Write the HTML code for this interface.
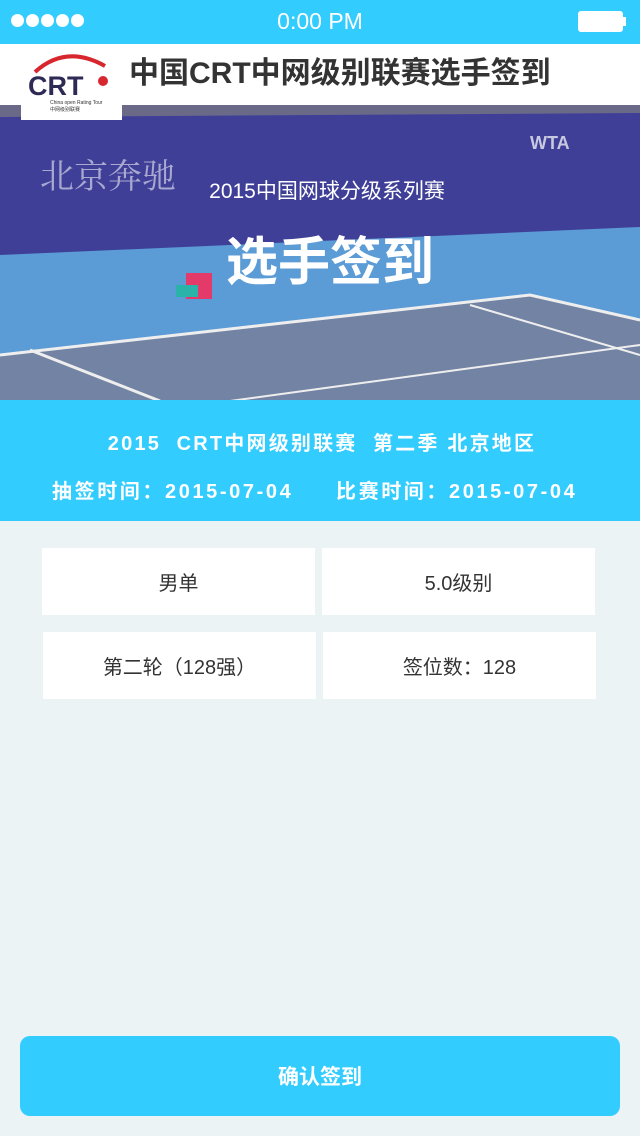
<!DOCTYPE html>
<html><head><meta charset="utf-8"><style>
*{margin:0;padding:0;box-sizing:border-box}
body{width:640px;height:1136px;background:#ecf3f5;font-family:"Liberation Sans","Noto Sans CJK SC",sans-serif;position:relative;overflow:hidden}
.abs{position:absolute}
.status{left:0;top:0;width:640px;height:44px;background:#33ccff;color:#fff}
.dot{width:13px;height:13px;border-radius:50%;background:#fff;top:14px}
.card{background:#fff;display:flex;align-items:center;justify-content:center;font-size:20px;color:#333}
</style></head><body>
<div class="abs status">
 <div class="abs dot" style="left:11px"></div><div class="abs dot" style="left:26px"></div><div class="abs dot" style="left:41px"></div><div class="abs dot" style="left:56px"></div><div class="abs dot" style="left:71px"></div>
 <div class="abs" style="left:0;width:640px;top:8px;text-align:center;font-size:23px">0:00 PM</div>
 <div class="abs" style="left:578px;top:11px;width:45px;height:21px;background:#fff;border-radius:3px"></div>
 <div class="abs" style="left:623px;top:17px;width:3px;height:9px;background:#fff"></div>
</div>
<div class="abs" style="left:0;top:44px;width:640px;height:61px;background:#fff"></div>
<!-- photo -->
<svg class="abs" style="left:0;top:105px" width="640" height="296" viewBox="0 0 640 296">
 <rect width="640" height="296" fill="#5b9bd6"/>
 <rect width="640" height="12" fill="#6a6a88"/>
 <polygon points="0,12 640,8 640,122 0,150" fill="#3f3f98"/>
 <polygon points="0,250 530,190 640,215 640,296 0,296" fill="#7383a4"/>
 <polyline points="0,250 530,190 640,215" stroke="#eee" stroke-width="3" fill="none"/>
 <line x1="30" y1="245" x2="160" y2="296" stroke="#eee" stroke-width="3"/>
 <line x1="230" y1="296" x2="640" y2="240" stroke="#eee" stroke-width="2"/>
 <line x1="470" y1="200" x2="640" y2="250" stroke="#eee" stroke-width="2"/>
 <text x="40" y="83" font-size="34" fill="#a8a8d0" font-family="Noto Serif CJK SC,serif">北京奔驰</text>
 <text x="530" y="44" font-size="18" font-weight="bold" fill="#c8c8e0">WTA</text>
 <rect x="186" y="168" width="26" height="26" fill="#e33a6a"/>
 <rect x="176" y="180" width="22" height="12" fill="#2ab3a8"/>
</svg>
<div class="abs" style="left:0;top:175px;width:654px;text-align:center;color:#fff;font-size:21px">2015中国网球分级系列赛</div>
<div class="abs" style="left:0;top:228px;width:660px;text-align:center;color:#fff;font-size:52px;font-weight:bold;line-height:70px">选手签到</div>
<!-- header -->
<div class="abs" style="left:21px;top:44px;width:101px;height:76px;background:#fff">
 <svg width="101" height="76" viewBox="0 0 101 76">
  <path d="M14 28 Q45 0 84 22" stroke="#d8262f" stroke-width="4" fill="none"/>
  <circle cx="82" cy="37" r="5" fill="#d8262f"/>
  <text x="7" y="51" font-size="27" font-weight="bold" fill="#2d2a55" font-family="Liberation Sans">CRT</text>
  <text x="29" y="60" font-size="5" fill="#333">China open Rating Tour</text>
  <text x="29" y="67" font-size="5" fill="#333">中网级别联赛</text>
 </svg>
</div>
<div class="abs" style="left:129px;top:54px;font-size:30px;font-weight:bold;color:#333;line-height:40px">中国CRT中网级别联赛选手签到</div>
<!-- info -->
<div class="abs" style="left:0;top:400px;width:640px;height:121px;background:#33ccff;color:#fff;font-weight:bold;font-size:20px">
 <div class="abs" style="left:0;width:644px;top:27px;text-align:center;letter-spacing:2.2px;white-space:pre">2015  CRT中网级别联赛  第二季 北京地区</div>
 <div class="abs" style="left:52px;top:75px;letter-spacing:2.6px">抽签时间：2015-07-04</div>
 <div class="abs" style="left:336px;top:75px;letter-spacing:2.6px">比赛时间：2015-07-04</div>
</div>
<div class="abs card" style="left:42px;top:548px;width:273px;height:67px">男单</div>
<div class="abs card" style="left:322px;top:548px;width:273px;height:67px">5.0级别</div>
<div class="abs card" style="left:43px;top:632px;width:273px;height:67px">第二轮（128强）</div>
<div class="abs card" style="left:323px;top:632px;width:273px;height:67px">签位数：128</div>
<div class="abs" style="left:20px;top:1036px;width:600px;height:80px;background:#33ccff;border-radius:10px;color:#fff;font-size:21px;font-weight:bold;display:flex;align-items:center;justify-content:center">确认签到</div>
</body></html>
